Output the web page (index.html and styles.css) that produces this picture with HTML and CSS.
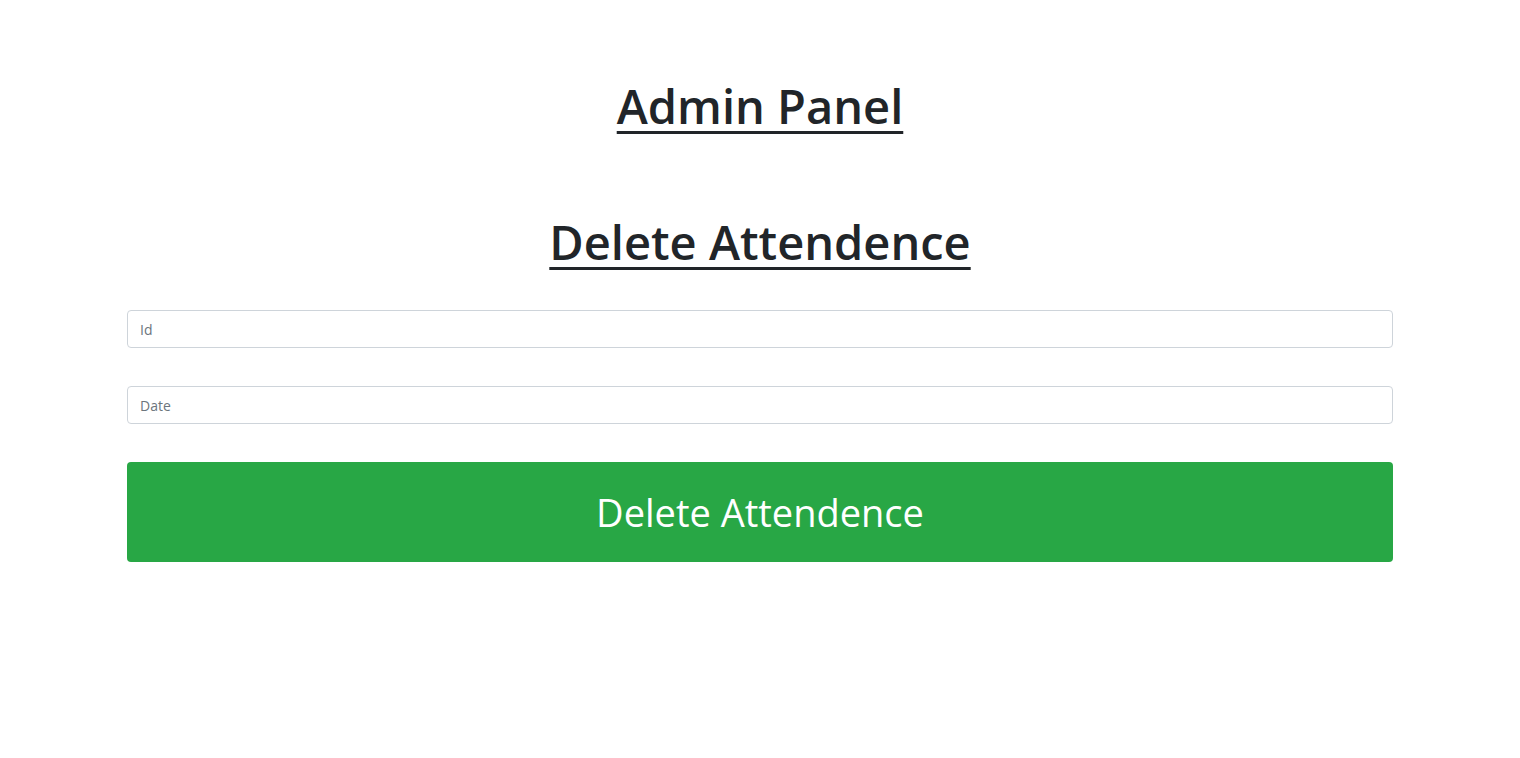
FILE: index.html
```html
<!DOCTYPE html>
<html lang="en">
<head>
<meta charset="utf-8">
<title>Admin Panel</title>
<link rel="stylesheet" href="styles.css">
</head>
<body>
<main class="page">
  <h1 class="title">Admin Panel</h1>
  <h2 class="title subtitle">Delete Attendence</h2>
  <form class="form">
    <input class="field" type="text" placeholder="Id">
    <input class="field" type="text" placeholder="Date">
    <button class="btn" type="button">Delete Attendence</button>
  </form>
</main>
</body>
</html>
```
FILE: styles.css
```css
* { box-sizing: border-box; }
body {
  margin: 0;
  background: #fff;
  color: #212529;
  font-family: "Open Sans", "Noto Sans", sans-serif;
}
.page {
  display: flex;
  flex-direction: column;
  padding: 77px 127px 0;
}
.title {
  margin: 0;
  text-align: center;
  font-size: 47px;
  font-weight: 600;
  line-height: 58px;
  text-decoration: underline;
  text-decoration-thickness: 3px;
  text-underline-offset: 7px;
}
.subtitle {
  margin-top: 78px;
}
.form {
  display: flex;
  flex-direction: column;
  gap: 38px;
  margin-top: 39px;
}
.field {
  height: 38px;
  border: 1px solid #ced4da;
  border-radius: 4px;
  padding: 0 12px;
  font-family: inherit;
  font-size: 14px;
  color: #495057;
}
.field::placeholder { color: #6c757d; }
.btn {
  height: 100px;
  border: none;
  border-radius: 4px;
  background: #28a745;
  color: #fff;
  font-family: inherit;
  font-size: 38px;
  cursor: pointer;
}
```
